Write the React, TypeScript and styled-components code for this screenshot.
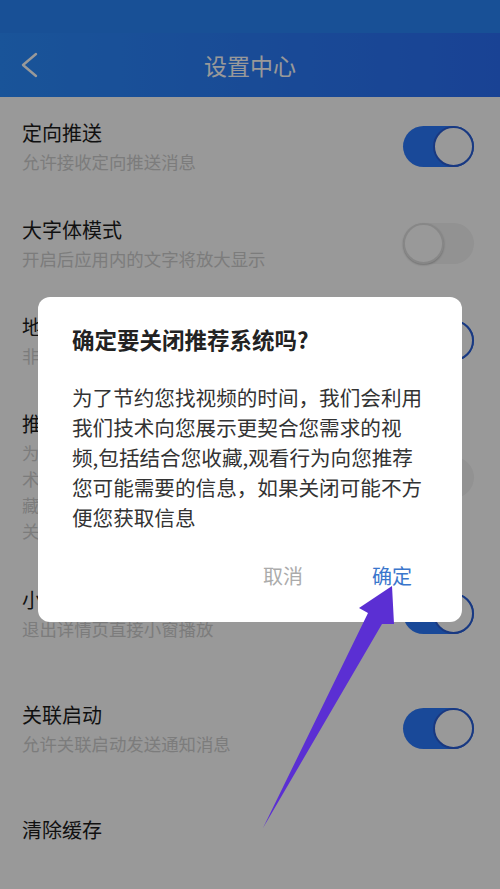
import React from "react";
import styled, { createGlobalStyle } from "styled-components";

const GlobalStyle = createGlobalStyle`
  html, body {
    margin: 0;
    padding: 0;
  }
  body {
    font-family: "Noto Sans CJK SC", "Noto Sans", sans-serif;
  }
`;

interface Setting {
  title: string;
  sub?: string[];
  on?: boolean;
  gapBefore?: boolean;
}

const settings: Setting[] = [
  { title: "定向推送", sub: ["允许接收定向推送消息"], on: true },
  { title: "大字体模式", sub: ["开启后应用内的文字将放大显示"], on: false },
  { title: "地理位置推荐", sub: ["非必要时不会获取您的位置信息"], on: true },
  {
    title: "推荐系统",
    sub: [
      "为了节约您找视频的时间，我们会利用我们的技",
      "术向您展示更契合您需求的视频,包括结合您收",
      "藏,观看行为向您推荐您可能需要的信息，如果",
      "关闭可能不方便您获取信息",
    ],
    on: false,
  },
  { title: "小窗播放", sub: ["退出详情页直接小窗播放"], on: true },
  { title: "关联启动", sub: ["允许关联启动发送通知消息"], on: true, gapBefore: true },
  { title: "清除缓存", gapBefore: true },
];

const dialogLines = [
  "为了节约您找视频的时间，我们会利用",
  "我们技术向您展示更契合您需求的视",
  "频,包括结合您收藏,观看行为向您推荐",
  "您可能需要的信息，如果关闭可能不方",
  "便您获取信息",
];

export default function App() {
  return (
    <>
      <GlobalStyle />
      <Screen>
        <StatusBar />
        <Header>
          <BackButton>
            <svg width="20" height="28" viewBox="0 0 20 28">
              <polyline
                points="16,3 3,14 16,25"
                fill="none"
                stroke="#ffffff"
                strokeWidth="2.4"
                strokeLinecap="round"
                strokeLinejoin="round"
              />
            </svg>
          </BackButton>
          <HeaderTitle>设置中心</HeaderTitle>
        </Header>

        <List>
          {settings.map((s) => (
            <Row key={s.title} $gap={!!s.gapBefore}>
              <RowText>
                <RowTitle>{s.title}</RowTitle>
                {s.sub && (
                  <RowSub $multi={s.sub.length > 1}>
                    {s.sub.map((line) => (
                      <div key={line}>{line}</div>
                    ))}
                  </RowSub>
                )}
              </RowText>
              {s.on !== undefined && (
                <Toggle $on={s.on}>
                  <Knob $on={s.on} />
                </Toggle>
              )}
            </Row>
          ))}
        </List>

        <Backdrop>
          <Dialog>
            <DialogTitle>确定要关闭推荐系统吗?</DialogTitle>
            <DialogBody>
              {dialogLines.map((line) => (
                <div key={line}>{line}</div>
              ))}
            </DialogBody>
            <DialogActions>
              <ActionButton $primary={false}>取消</ActionButton>
              <ActionButton $primary>确定</ActionButton>
            </DialogActions>
          </Dialog>
        </Backdrop>

        <ArrowLayer width="500" height="889" viewBox="0 0 500 889">
          <polygon
            points="392,586 359,608 368,613 263,828 382,624 394,624"
            fill="#5b2fd3"
          />
        </ArrowLayer>
      </Screen>
    </>
  );
}

const Screen = styled.div`
  position: relative;
  width: 500px;
  height: 889px;
  overflow: hidden;
  background: #ffffff;
`;

const StatusBar = styled.div`
  height: 33px;
  background: #2886fa;
`;

const Header = styled.div`
  position: relative;
  height: 64px;
  display: flex;
  align-items: center;
  justify-content: center;
  background: linear-gradient(90deg, #2a8cff 0%, #2b6ff7 100%);
`;

const BackButton = styled.div`
  position: absolute;
  left: 20px;
  top: 50%;
  transform: translateY(-50%);
  display: flex;
`;

const HeaderTitle = styled.div`
  color: #ffffff;
  font-size: 23px;
  letter-spacing: 0;
`;

const List = styled.div`
  display: flex;
  flex-direction: column;
`;

const Row = styled.div<{ $gap: boolean }>`
  display: flex;
  align-items: center;
  justify-content: space-between;
  padding: 22px 26px 20px 22px;
  margin-top: ${(p) => (p.$gap ? "18px" : "0")};
`;

const RowText = styled.div`
  display: flex;
  flex-direction: column;
`;

const RowTitle = styled.div`
  font-size: 20px;
  line-height: 28px;
  color: #1c1c1c;
`;

const RowSub = styled.div<{ $multi: boolean }>`
  margin-top: 2px;
  font-size: 17.4px;
  line-height: ${(p) => (p.$multi ? "26px" : "25px")};
  color: #cfcfcf;
  white-space: nowrap;
`;

const Toggle = styled.div<{ $on: boolean }>`
  width: 71px;
  height: 41px;
  box-sizing: border-box;
  border-radius: 21px;
  display: flex;
  align-items: center;
  justify-content: ${(p) => (p.$on ? "flex-end" : "flex-start")};
  background: ${(p) => (p.$on ? "#2b7aff" : "#f3f3f3")};
  flex-shrink: 0;
`;

const Knob = styled.div<{ $on: boolean }>`
  width: 41px;
  height: 41px;
  box-sizing: border-box;
  border-radius: 50%;
  background: #ffffff;
  border: 2px solid ${(p) => (p.$on ? "#2a5fd8" : "#e2e2e2")};
  box-shadow: ${(p) => (p.$on ? "none" : "0 1px 2px rgba(0,0,0,0.25)")};
`;

const Backdrop = styled.div`
  position: absolute;
  inset: 0;
  background: rgba(0, 0, 0, 0.4);
  display: flex;
  justify-content: center;
  align-items: flex-start;
  padding-top: 297px;
  box-sizing: border-box;
`;

const Dialog = styled.div`
  width: 424px;
  box-sizing: border-box;
  background: #ffffff;
  border-radius: 12px;
  padding: 27px 36px 26px 34px;
`;

const DialogTitle = styled.div`
  font-size: 22.5px;
  line-height: 30px;
  font-weight: 700;
  color: #222222;
`;

const DialogBody = styled.div`
  margin-top: 28px;
  font-size: 20.6px;
  line-height: 30px;
  color: #333333;
  white-space: nowrap;
`;

const DialogActions = styled.div`
  margin-top: 24px;
  height: 40px;
  display: flex;
  align-items: center;
  justify-content: flex-end;
  gap: 69px;
  padding-right: 14px;
`;

const ActionButton = styled.div<{ $primary: boolean }>`
  font-size: 20px;
  line-height: 40px;
  color: ${(p) => (p.$primary ? "#3a76cc" : "#ababab")};
`;

const ArrowLayer = styled.svg`
  position: absolute;
  left: 0;
  top: 0;
  pointer-events: none;
`;
